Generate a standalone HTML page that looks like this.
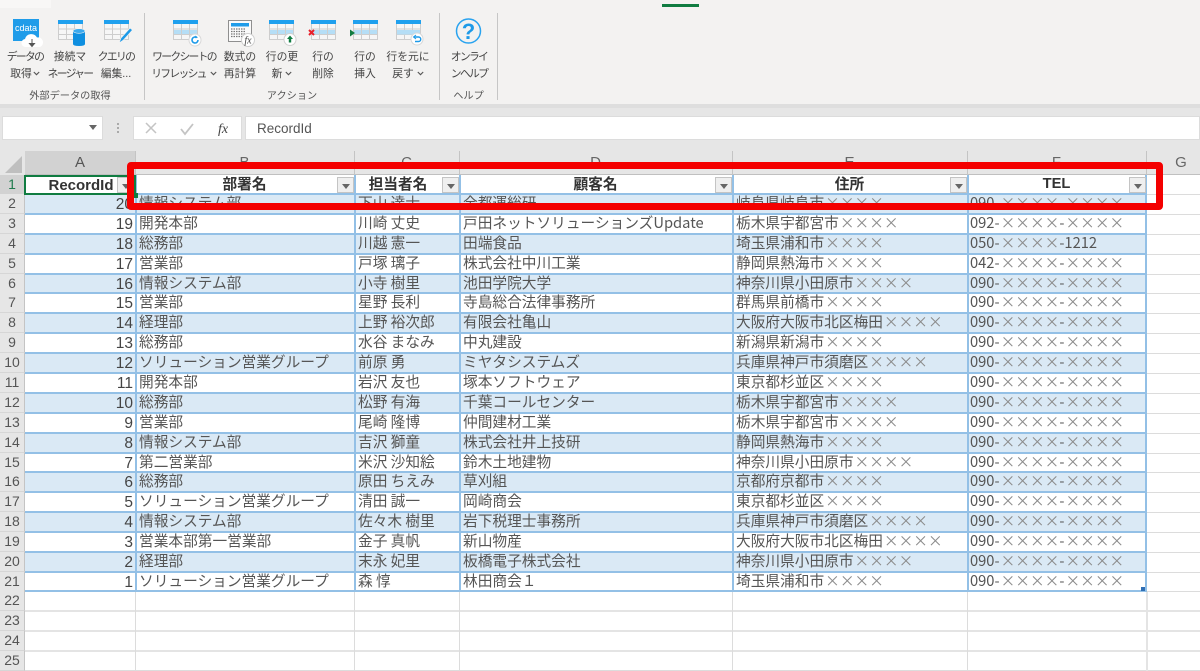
<!DOCTYPE html>
<html lang="ja"><head><meta charset="utf-8"><title>Excel</title>
<style>
html,body{margin:0;padding:0;width:1200px;height:671px;overflow:hidden;background:#fff}
*{box-sizing:border-box}
body{position:relative;font-family:"Liberation Sans","Noto Sans CJK JP",sans-serif;color:#444}
.a{position:absolute}
.rl{position:absolute;width:70px;text-align:center;font-size:10.8px;line-height:16px;color:#444;white-space:nowrap}
.k{letter-spacing:-1.7px}
.rl svg{margin-left:1px;vertical-align:1px}
.gl{position:absolute;top:90px;text-align:center;font-size:10.2px;line-height:14px;color:#555;white-space:nowrap}
.sep{position:absolute;top:13px;width:1px;height:87px;background:#c6c6c6}
.h{position:absolute;height:1px;background:#dcdcdc}
.v{position:absolute;width:1px;background:#dcdcdc}
.bh{position:absolute;left:25px;width:1121px;height:2px;background:#93c0e6}
.bv{position:absolute;top:175px;height:417px;width:2px;background:#93c0e6}
.band{position:absolute;left:25px;width:1121px;height:20px;background:#dae9f5}
.rn{position:absolute;left:0;width:25px;height:20px;background:#e6e6e6;text-align:center;font-size:14px;line-height:18px;color:#555;border-bottom:1px solid #d6d6d6;border-right:1px solid #c4c4c4}
.ch{position:absolute;top:162px;margin-top:-9px;height:20px;text-align:center;font-size:15px;line-height:20px;color:#666}
.r{position:absolute;left:0;width:1200px;height:20px;font-family:"Noto Sans CJK JP","Liberation Sans",sans-serif;font-size:14.7px;line-height:19px;color:#555;white-space:nowrap}
.r span{position:absolute;top:-1px}
.r i{font-style:normal;color:#8c8c8c;margin-left:1px}
.r .n{top:1px;left:25px;width:108px;text-align:right;font-family:"Liberation Sans",sans-serif;font-size:15.5px;color:#444}
.r .b{left:139px}.r .c{left:358px}.r .d{left:463px}.r .e{left:736px}.r .f{left:970px}
.t{position:absolute;top:174px;height:19px;text-align:center;font-family:"Noto Sans CJK JP","Liberation Sans",sans-serif;font-weight:700;font-size:14.7px;line-height:19px;color:#333;white-space:nowrap}
.fb{position:absolute;top:177px;width:17px;height:16px;background:#efefef;border:1px solid #c4c4c4}
.fb:after{content:"";position:absolute;left:4px;top:6px;border:4px solid transparent;border-top:5px solid #666;border-bottom:0}
</style></head>
<body>
<svg width="0" height="0" style="position:absolute"><defs>
<symbol id="tb" viewBox="0 0 25 20"><rect width="25" height="20" fill="#f6f6f6"/><path d="M.5 4v15.5h24V4M.5 9h24M.5 14.5h24M8.500 4v15.5M16.500 4v15.500" fill="none" stroke="#cdcdcd"/><rect width="25" height="4" fill="#1fa0ee"/></symbol>
<symbol id="tbh" viewBox="0 0 25 20"><rect width="25" height="20" fill="#f6f6f6"/><rect y="10" width="25" height="4.500" fill="#b5def6"/><path d="M.5 4v15.500h24V4M.5 9h24M.5 14.500h24M8.500 4v15.500M16.500 4v15.500" fill="none" stroke="#cdcdcd"/><rect width="25" height="4" fill="#1fa0ee"/></symbol>
<symbol id="cv" viewBox="0 0 7 5"><path d="M.8 1l2.700 2.700L6.200 1" fill="none" stroke="#555" stroke-width="1.100"/></symbol>
</defs></svg>

<!-- ribbon -->
<div class="a" style="left:0;top:0;width:1200px;height:104px;background:#f3f2f1"></div>
<div class="a" style="left:0;top:0;width:51px;height:8px;background:#f8f7f6"></div>
<div class="a" style="left:662px;top:4px;width:37px;height:3px;background:#107c41"></div>
<div class="a" style="left:0;top:104px;width:1200px;height:47px;background:#e6e6e6"></div>
<div class="a" style="left:0;top:104px;width:1200px;height:4px;background:#dedede"></div>
<div class="sep" style="left:144px"></div><div class="sep" style="left:439px"></div><div class="sep" style="left:497px"></div>

<svg class="a" style="left:0;top:0" width="500" height="52" xmlns="http://www.w3.org/2000/svg">
<rect x="13" y="19" width="26" height="22" fill="#1f9ce9"/>
<text x="26" y="31" text-anchor="middle" font-family="Liberation Sans" font-size="9" textLength="22" lengthAdjust="spacingAndGlyphs" fill="#fff">cdata</text>
<path d="M26 47a4 4 0 0 1-1-8 6.500 6.500 0 0 1 12-1.500 5 5 0 0 1 3 9.500z" fill="#fff"/>
<path d="M32 39v5M29.500 43.500l2.500 3 2.500-3z" fill="#555" stroke="#555"/>
<use href="#tb" x="58" y="20" width="25" height="20"/>
<path d="M73 31v13q0 2 6 2t6-2V31z" fill="#0f8fe0"/><ellipse cx="79" cy="31" rx="6" ry="2.300" fill="#3aa9ee" stroke="#f3f2f1" stroke-width=".6"/>
<use href="#tb" x="104" y="20" width="25" height="20"/>
<path d="M119 43l2-5 9-10 2.500 2-9 10z" fill="#1d9ae8" stroke="#f3f2f1" stroke-width=".7"/>
<use href="#tbh" x="173" y="20" width="25" height="20"/>
<circle cx="195" cy="40" r="6" fill="#fff" stroke="#d8d8d8"/><path d="M198 40a3 3 0 1 1-1.200-2.400" fill="none" stroke="#1d9ae8" stroke-width="1.600"/><path d="M195.500 35.500l2.500 2-2.800.8z" fill="#1d9ae8"/>
<rect x="228.500" y="20.500" width="23" height="21" fill="#fafafa" stroke="#8f8f8f"/><rect x="231" y="23" width="18" height="3.500" fill="#1f9ce9"/>
<path d="M231 29h15M231 31.500h15M231 34h15M231 36.500h15" stroke="#777" stroke-width="1.300" stroke-dasharray="1.500 1"/>
<circle cx="248" cy="40" r="6.500" fill="#fff" stroke="#cfcfcf"/><text x="248" y="43.500" text-anchor="middle" font-family="Liberation Serif" font-style="italic" font-size="10" fill="#444">fx</text>
<use href="#tbh" x="269" y="20" width="25" height="20"/>
<circle cx="290" cy="39.500" r="6" fill="#fff" stroke="#d0d0d0"/><path d="M290 35.500l3 3.500h-1.800v3.500h-2.400V39H287z" fill="#107c41"/>
<use href="#tbh" x="311" y="20" width="25" height="20"/>
<path d="M309 30l5 5M314 30l-5 5" stroke="#e8202a" stroke-width="2"/>
<use href="#tbh" x="353" y="20" width="25" height="20"/>
<path d="M350 29.500l5 3.500-5 3.500z" fill="#107c41"/>
<use href="#tb" x="396" y="20" width="25" height="20"/><rect x="397" y="30" width="23" height="4.500" fill="#b5def6"/>
<circle cx="417" cy="39" r="6" fill="#fff" stroke="#d8d8d8"/><path d="M414 37h4.500a2 2 0 0 1 0 4.500H415" fill="none" stroke="#1d9ae8" stroke-width="1.400"/><path d="M416 35l-2.500 2 2.500 2" fill="none" stroke="#1d9ae8" stroke-width="1"/>
<circle cx="468.500" cy="31" r="12" fill="none" stroke="#29a3ef" stroke-width="1.500"/>
<text x="468.500" y="39" text-anchor="middle" font-family="Liberation Sans" font-weight="700" font-size="22" fill="#1d9ae8">?</text>
</svg>

<div class="rl k" style="left:-10px;top:49px">データの</div><div class="rl" style="left:-10px;top:66px">取得<svg width="7" height="5"><use href="#cv"/></svg></div>
<div class="rl" style="left:35px;top:49px">接続マ</div><div class="rl k" style="left:35px;top:66px">ネージャー</div>
<div class="rl k" style="left:81px;top:49px">クエリの</div><div class="rl" style="left:81px;top:66px">編集...</div>
<div class="rl k" style="left:149px;top:49px">ワークシートの</div><div class="rl k" style="left:149px;top:66px">リフレッシュ<svg width="7" height="5" style="margin-left:4px"><use href="#cv"/></svg></div>
<div class="rl" style="left:205px;top:49px">数式の</div><div class="rl" style="left:205px;top:66px">再計算</div>
<div class="rl" style="left:247px;top:49px">行の更</div><div class="rl" style="left:247px;top:66px">新<svg width="7" height="5" style="margin-left:3px"><use href="#cv"/></svg></div>
<div class="rl" style="left:288px;top:49px">行の</div><div class="rl" style="left:288px;top:66px">削除</div>
<div class="rl" style="left:330px;top:49px">行の</div><div class="rl" style="left:330px;top:66px">挿入</div>
<div class="rl" style="left:373px;top:49px">行を元に</div><div class="rl" style="left:373px;top:66px">戻す<svg width="7" height="5" style="margin-left:3px"><use href="#cv"/></svg></div>
<div class="rl k" style="left:434px;top:49px">オンライ</div><div class="rl k" style="left:434px;top:66px">ンヘルプ</div>
<div class="gl" style="left:0;width:140px">外部データの取得</div>
<div class="gl" style="left:145px;width:294px">アクション</div>
<div class="gl" style="left:440px;width:57px">ヘルプ</div>

<!-- formula bar -->
<div class="a" style="left:2px;top:116px;width:101px;height:24px;background:#fff;border:1px solid #dcdcdc"></div>
<div class="a" style="left:89px;top:125px;border:4px solid transparent;border-top:5px solid #666;border-bottom:0"></div>
<div class="a" style="left:117px;top:123px;width:2px;height:2px;background:#aaa;box-shadow:0 4px #aaa,0 8px #aaa"></div>
<div class="a" style="left:133px;top:116px;width:109px;height:24px;background:#fff;border:1px solid #dcdcdc"></div>
<svg class="a" style="left:133px;top:116px" width="109" height="24"><path d="M13 7l10 10M23 7L13 17" stroke="#c4c4c4" stroke-width="1.500"/><path d="M48 13l4 5 8-10" fill="none" stroke="#c4c4c4" stroke-width="1.800"/><text x="85" y="17" font-family="Liberation Serif" font-style="italic" font-size="14" fill="#444">fx</text></svg>
<div class="a" style="left:245px;top:116px;width:955px;height:24px;background:#fff;border:1px solid #dcdcdc;font-size:13.500px;line-height:23px;padding-left:11px;color:#555">RecordId</div>

<!-- sheet bg / col headers -->
<div class="a" style="left:0;top:151px;width:1200px;height:24px;background:#e6e6e6"></div>
<div class="a" style="left:25px;top:151px;width:110px;height:24px;background:#d2d2d2"></div>
<div class="a" style="left:25px;top:174px;width:1175px;height:1px;background:#c0c0c0"></div>
<svg class="a" style="left:4px;top:155px" width="19" height="18"><path d="M18 1v17H1z" fill="#bfbfbf"/></svg>
<div class="ch" style="left:25px;width:110px;color:#555">A</div>
<div class="ch" style="left:135px;width:219px">B</div>
<div class="ch" style="left:354px;width:105px">C</div>
<div class="ch" style="left:459px;width:273px">D</div>
<div class="ch" style="left:732px;width:235px">E</div>
<div class="ch" style="left:967px;width:179px">F</div>
<div class="ch" style="left:1146px;width:70px">G</div>
<div class="v" style="left:135px;top:151px;height:24px;background:#c4c4c4"></div>
<div class="v" style="left:354px;top:151px;height:24px;background:#c4c4c4"></div>
<div class="v" style="left:459px;top:151px;height:24px;background:#c4c4c4"></div>
<div class="v" style="left:732px;top:151px;height:24px;background:#c4c4c4"></div>
<div class="v" style="left:967px;top:151px;height:24px;background:#c4c4c4"></div>
<div class="v" style="left:1146px;top:151px;height:24px;background:#c4c4c4"></div>

<!-- row bands -->
<div class="band" style="top:194px"></div><div class="band" style="top:234px"></div><div class="band" style="top:274px"></div><div class="band" style="top:313px"></div><div class="band" style="top:353px"></div><div class="band" style="top:393px"></div><div class="band" style="top:433px"></div><div class="band" style="top:472px"></div><div class="band" style="top:512px"></div><div class="band" style="top:552px"></div>

<!-- row numbers -->
<div class="rn" style="top:175px;background:#d2d2d2;color:#1f7a4d">1</div><div class="rn" style="top:194px">2</div><div class="rn" style="top:214px">3</div><div class="rn" style="top:234px">4</div><div class="rn" style="top:254px">5</div><div class="rn" style="top:274px">6</div><div class="rn" style="top:293px">7</div><div class="rn" style="top:313px">8</div><div class="rn" style="top:333px">9</div><div class="rn" style="top:353px">10</div><div class="rn" style="top:373px">11</div><div class="rn" style="top:393px">12</div><div class="rn" style="top:413px">13</div><div class="rn" style="top:433px">14</div><div class="rn" style="top:453px">15</div><div class="rn" style="top:472px">16</div><div class="rn" style="top:492px">17</div><div class="rn" style="top:512px">18</div><div class="rn" style="top:532px">19</div><div class="rn" style="top:552px">20</div><div class="rn" style="top:572px">21</div><div class="rn" style="top:591px">22</div><div class="rn" style="top:611px">23</div><div class="rn" style="top:631px">24</div><div class="rn" style="top:651px">25</div>

<!-- outside grid lines -->
<div class="h" style="left:1146px;width:54px;top:194px"></div><div class="h" style="left:1146px;width:54px;top:214px"></div><div class="h" style="left:1146px;width:54px;top:234px"></div><div class="h" style="left:1146px;width:54px;top:254px"></div><div class="h" style="left:1146px;width:54px;top:274px"></div><div class="h" style="left:1146px;width:54px;top:293px"></div><div class="h" style="left:1146px;width:54px;top:313px"></div><div class="h" style="left:1146px;width:54px;top:333px"></div><div class="h" style="left:1146px;width:54px;top:353px"></div><div class="h" style="left:1146px;width:54px;top:373px"></div><div class="h" style="left:1146px;width:54px;top:393px"></div><div class="h" style="left:1146px;width:54px;top:413px"></div><div class="h" style="left:1146px;width:54px;top:433px"></div><div class="h" style="left:1146px;width:54px;top:453px"></div><div class="h" style="left:1146px;width:54px;top:472px"></div><div class="h" style="left:1146px;width:54px;top:492px"></div><div class="h" style="left:1146px;width:54px;top:512px"></div><div class="h" style="left:1146px;width:54px;top:532px"></div><div class="h" style="left:1146px;width:54px;top:552px"></div><div class="h" style="left:1146px;width:54px;top:572px"></div><div class="h" style="left:1146px;width:54px;top:591px"></div><div class="h" style="left:25px;width:1175px;top:610px;height:2px;background:#e4e4e4"></div><div class="h" style="left:25px;width:1175px;top:630px;height:2px;background:#e4e4e4"></div><div class="h" style="left:25px;width:1175px;top:650px;height:2px;background:#e4e4e4"></div><div class="h" style="left:25px;width:1175px;top:670px"></div>
<div class="v" style="left:135px;top:592px;height:79px"></div><div class="v" style="left:354px;top:592px;height:79px"></div><div class="v" style="left:459px;top:592px;height:79px"></div><div class="v" style="left:732px;top:592px;height:79px"></div><div class="v" style="left:967px;top:592px;height:79px"></div><div class="v" style="left:1146px;top:592px;height:79px;width:2px;background:#e4e4e4"></div>

<!-- table lines -->
<div class="bh" style="top:193px"></div><div class="bh" style="top:213px"></div><div class="bh" style="top:233px"></div><div class="bh" style="top:253px"></div><div class="bh" style="top:273px"></div><div class="bh" style="top:292px"></div><div class="bh" style="top:312px"></div><div class="bh" style="top:332px"></div><div class="bh" style="top:352px"></div><div class="bh" style="top:372px"></div><div class="bh" style="top:392px"></div><div class="bh" style="top:412px"></div><div class="bh" style="top:432px"></div><div class="bh" style="top:452px"></div><div class="bh" style="top:471px"></div><div class="bh" style="top:491px"></div><div class="bh" style="top:511px"></div><div class="bh" style="top:531px"></div><div class="bh" style="top:551px"></div><div class="bh" style="top:571px"></div><div class="bh" style="top:590px"></div>
<div class="bv" style="left:135px"></div><div class="bv" style="left:354px"></div><div class="bv" style="left:459px"></div><div class="bv" style="left:732px"></div><div class="bv" style="left:967px"></div><div class="bv" style="left:1145px"></div>

<!-- header row -->
<div class="t" style="top:176px;left:48px;width:66px;font-family:'Liberation Sans',sans-serif;font-size:15px">RecordId</div>
<div class="t" style="left:135px;width:219px">部署名</div>
<div class="t" style="left:354px;width:88px">担当者名</div>
<div class="t" style="left:459px;width:273px">顧客名</div>
<div class="t" style="left:732px;width:235px">住所</div>
<div class="t" style="top:175px;left:967px;width:179px;font-family:'Liberation Sans',sans-serif">TEL</div>
<div class="fb" style="left:117px"></div><div class="fb" style="left:337px"></div><div class="fb" style="left:442px"></div><div class="fb" style="left:715px"></div><div class="fb" style="left:950px"></div><div class="fb" style="left:1129px"></div>

<!-- data -->
<div class="r" style="top:194px"><span class="n">20</span><span class="b">情報システム部</span><span class="c">下山 達士</span><span class="d">全都運総研</span><span class="e">岐阜県岐阜市<i>××××</i></span><span class="f">090-<i>××××</i>-<i>××××</i></span></div>
<div class="r" style="top:214px"><span class="n">19</span><span class="b">開発本部</span><span class="c">川崎 丈史</span><span class="d">戸田ネットソリューションズUpdate</span><span class="e">栃木県宇都宮市<i>××××</i></span><span class="f">092-<i>××××</i>-<i>××××</i></span></div>
<div class="r" style="top:234px"><span class="n">18</span><span class="b">総務部</span><span class="c">川越 憲一</span><span class="d">田端食品</span><span class="e">埼玉県浦和市<i>××××</i></span><span class="f">050-<i>××××</i>-1212</span></div>
<div class="r" style="top:254px"><span class="n">17</span><span class="b">営業部</span><span class="c">戸塚 璃子</span><span class="d">株式会社中川工業</span><span class="e">静岡県熱海市<i>××××</i></span><span class="f">042-<i>××××</i>-<i>××××</i></span></div>
<div class="r" style="top:274px"><span class="n">16</span><span class="b">情報システム部</span><span class="c">小寺 樹里</span><span class="d">池田学院大学</span><span class="e">神奈川県小田原市<i>××××</i></span><span class="f">090-<i>××××</i>-<i>××××</i></span></div>
<div class="r" style="top:293px"><span class="n">15</span><span class="b">営業部</span><span class="c">星野 長利</span><span class="d">寺島総合法律事務所</span><span class="e">群馬県前橋市<i>××××</i></span><span class="f">090-<i>××××</i>-<i>××××</i></span></div>
<div class="r" style="top:313px"><span class="n">14</span><span class="b">経理部</span><span class="c">上野 裕次郎</span><span class="d">有限会社亀山</span><span class="e">大阪府大阪市北区梅田<i>××××</i></span><span class="f">090-<i>××××</i>-<i>××××</i></span></div>
<div class="r" style="top:333px"><span class="n">13</span><span class="b">総務部</span><span class="c">水谷 まなみ</span><span class="d">中丸建設</span><span class="e">新潟県新潟市<i>××××</i></span><span class="f">090-<i>××××</i>-<i>××××</i></span></div>
<div class="r" style="top:353px"><span class="n">12</span><span class="b">ソリューション営業グループ</span><span class="c">前原 勇</span><span class="d">ミヤタシステムズ</span><span class="e">兵庫県神戸市須磨区<i>××××</i></span><span class="f">090-<i>××××</i>-<i>××××</i></span></div>
<div class="r" style="top:373px"><span class="n">11</span><span class="b">開発本部</span><span class="c">岩沢 友也</span><span class="d">塚本ソフトウェア</span><span class="e">東京都杉並区<i>××××</i></span><span class="f">090-<i>××××</i>-<i>××××</i></span></div>
<div class="r" style="top:393px"><span class="n">10</span><span class="b">総務部</span><span class="c">松野 有海</span><span class="d">千葉コールセンター</span><span class="e">栃木県宇都宮市<i>××××</i></span><span class="f">090-<i>××××</i>-<i>××××</i></span></div>
<div class="r" style="top:413px"><span class="n">9</span><span class="b">営業部</span><span class="c">尾崎 隆博</span><span class="d">仲間建材工業</span><span class="e">栃木県宇都宮市<i>××××</i></span><span class="f">090-<i>××××</i>-<i>××××</i></span></div>
<div class="r" style="top:433px"><span class="n">8</span><span class="b">情報システム部</span><span class="c">吉沢 獅童</span><span class="d">株式会社井上技研</span><span class="e">静岡県熱海市<i>××××</i></span><span class="f">090-<i>××××</i>-<i>××××</i></span></div>
<div class="r" style="top:453px"><span class="n">7</span><span class="b">第二営業部</span><span class="c">米沢 沙知絵</span><span class="d">鈴木土地建物</span><span class="e">神奈川県小田原市<i>××××</i></span><span class="f">090-<i>××××</i>-<i>××××</i></span></div>
<div class="r" style="top:472px"><span class="n">6</span><span class="b">総務部</span><span class="c">原田 ちえみ</span><span class="d">草刈組</span><span class="e">京都府京都市<i>××××</i></span><span class="f">090-<i>××××</i>-<i>××××</i></span></div>
<div class="r" style="top:492px"><span class="n">5</span><span class="b">ソリューション営業グループ</span><span class="c">清田 誠一</span><span class="d">岡崎商会</span><span class="e">東京都杉並区<i>××××</i></span><span class="f">090-<i>××××</i>-<i>××××</i></span></div>
<div class="r" style="top:512px"><span class="n">4</span><span class="b">情報システム部</span><span class="c">佐々木 樹里</span><span class="d">岩下税理士事務所</span><span class="e">兵庫県神戸市須磨区<i>××××</i></span><span class="f">090-<i>××××</i>-<i>××××</i></span></div>
<div class="r" style="top:532px"><span class="n">3</span><span class="b">営業本部第一営業部</span><span class="c">金子 真帆</span><span class="d">新山物産</span><span class="e">大阪府大阪市北区梅田<i>××××</i></span><span class="f">090-<i>××××</i>-<i>××××</i></span></div>
<div class="r" style="top:552px"><span class="n">2</span><span class="b">経理部</span><span class="c">末永 妃里</span><span class="d">板橋電子株式会社</span><span class="e">神奈川県小田原市<i>××××</i></span><span class="f">090-<i>××××</i>-<i>××××</i></span></div>
<div class="r" style="top:572px"><span class="n">1</span><span class="b">ソリューション営業グループ</span><span class="c">森 惇</span><span class="d">林田商会１</span><span class="e">埼玉県浦和市<i>××××</i></span><span class="f">090-<i>××××</i>-<i>××××</i></span></div>

<div class="a" style="left:1141px;top:587px;width:4px;height:4px;background:#2f6fb5"></div>
<!-- selection -->
<div class="a" style="left:24px;top:175px;width:112px;height:20px;border:2px solid #107c41"></div>
<div class="a" style="left:133px;top:193px;width:5px;height:5px;background:#107c41"></div>
<!-- red rect -->
<div class="a" style="left:127px;top:162px;width:1036px;height:48px;border:7px solid #f40000;border-radius:4px"></div>
</body></html>
